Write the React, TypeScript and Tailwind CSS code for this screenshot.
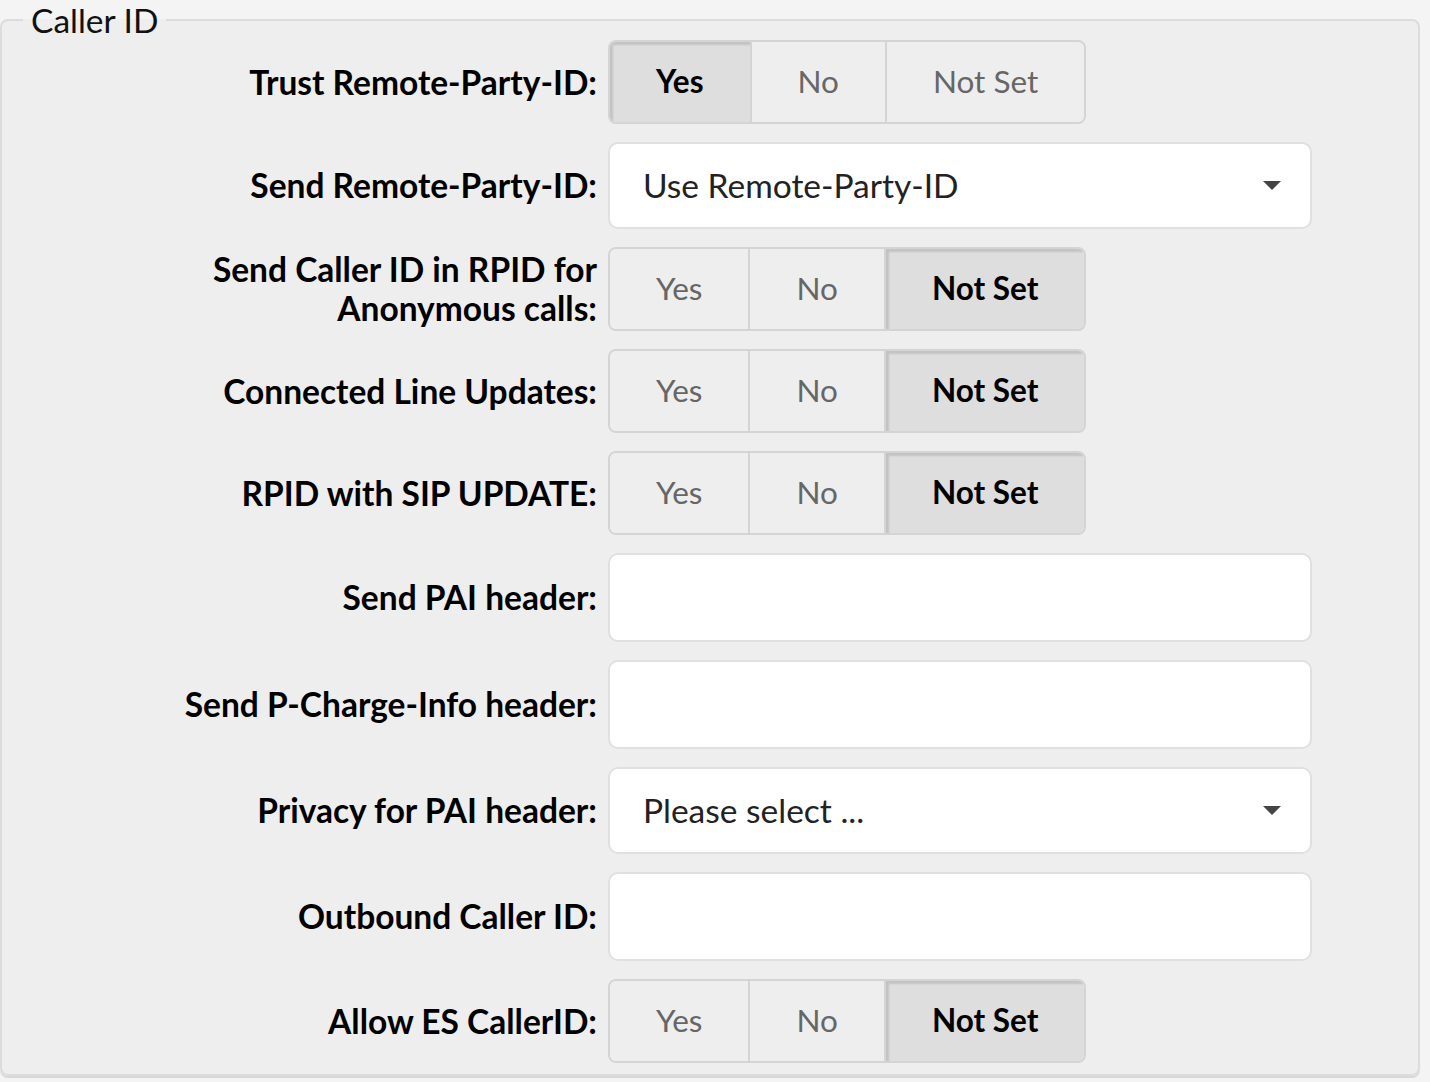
import React from "react";

type Tri = "Yes" | "No" | "Not Set";

function ToggleGroup({ value }: { value: Tri }) {
  const opts: Tri[] = ["Yes", "No", "Not Set"];
  return (
    <div className="flex h-[84px] rounded-[8px] border-2 border-[#d4d4d4] overflow-hidden">
      {opts.map((o, i) => (
        <div
          key={o}
          className={`flex items-center px-[46px] text-[31.5px] ${i > 0 ? "border-l-2 border-[#d4d4d4]" : ""} ${
            o === value
              ? "bg-[#dedede] font-bold text-black shadow-[inset_3px_3px_2px_rgba(0,0,0,0.12)]"
              : "bg-[#eeeeee] text-[#666666]"
          }`}
        >
          {o}
        </div>
      ))}
    </div>
  );
}

function Select({ text }: { text: string }) {
  return (
    <div className="flex h-[87px] w-[704px] items-center justify-between rounded-[10px] border-2 border-[#e0e0e0] bg-white pl-[33px] pr-[28px] text-[33.5px] text-[#222]">
      <span>{text}</span>
      <svg width="20" height="11" viewBox="0 0 20 11"><path d="M1 1h18l-9 9z" fill="#444" /></svg>
    </div>
  );
}

function Input() {
  return <div className="h-[89px] w-[704px] rounded-[10px] border-2 border-[#e0e0e0] bg-white" />;
}

function Row({ label, children }: { label: React.ReactNode; children: React.ReactNode }) {
  return (
    <div className="flex items-center">
      <div className="w-[595px] text-right text-[33.5px] font-bold leading-[39px] text-black">{label}</div>
      <div className="ml-[11px]">{children}</div>
    </div>
  );
}

export default function App() {
  return (
    <div className="min-h-[1082px] bg-[#f4f4f4]" style={{ fontFamily: "Lato, 'Noto Sans', sans-serif" }}>
      <fieldset className="w-[1420px] rounded-[8px] border-2 border-[#dcdcdc] bg-[#eeeeee] pb-[11px] shadow-[0_2px_0_#d8d8d8]">
        <legend className="ml-[21px] px-[8px] text-[33.5px] leading-[40px] text-[#111]">Caller ID</legend>
        <div className="flex flex-col gap-[18px]">
          <Row label="Trust Remote-Party-ID:"><ToggleGroup value="Yes" /></Row>
          <Row label="Send Remote-Party-ID:"><Select text="Use Remote-Party-ID" /></Row>
          <Row label={<>Send Caller ID in RPID for<br />Anonymous calls:</>}><ToggleGroup value="Not Set" /></Row>
          <Row label="Connected Line Updates:"><ToggleGroup value="Not Set" /></Row>
          <Row label="RPID with SIP UPDATE:"><ToggleGroup value="Not Set" /></Row>
          <Row label="Send PAI header:"><Input /></Row>
          <Row label="Send P-Charge-Info header:"><Input /></Row>
          <Row label="Privacy for PAI header:"><Select text="Please select ..." /></Row>
          <Row label="Outbound Caller ID:"><Input /></Row>
          <Row label="Allow ES CallerID:"><ToggleGroup value="Not Set" /></Row>
        </div>
      </fieldset>
    </div>
  );
}
